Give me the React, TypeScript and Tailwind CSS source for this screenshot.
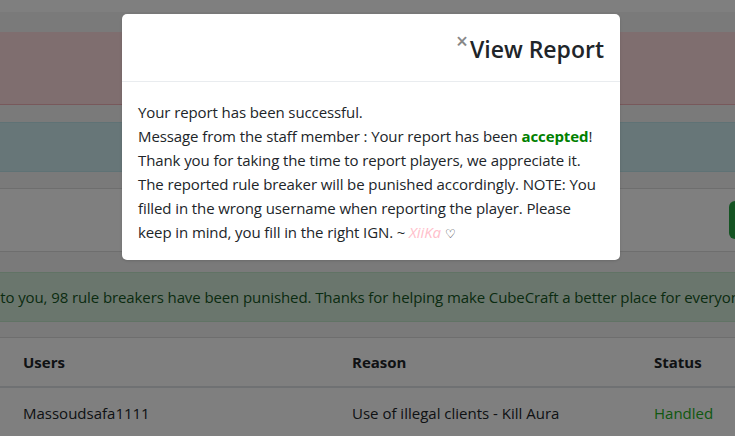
export default function App() {
  return (
    <div
      className="relative h-[436px] w-[735px] overflow-hidden bg-white text-[#212529]"
      style={{ fontFamily: '"Open Sans", "Noto Sans", sans-serif' }}
    >
      {/* page behind the modal */}
      <div className="h-[12px] bg-white" />
      <div className="h-[20px] bg-[#f4f4f4]" />
      <div className="h-[73px] border-b border-[#f1b0b7] bg-[#fedcdf]" />
      <div className="h-[17px] bg-[#f4f4f4]" />
      <div className="h-[50px] border-y border-[#bee5eb] bg-[#cfecf0]" />
      <div className="h-[16px] bg-[#f4f4f4]" />
      <div className="flex h-[64px] items-center justify-end border-y border-[#dcdcdc] bg-white">
        <div className="-mr-[20px] h-[38px] w-[26px] rounded-md bg-[#28a745]" />
      </div>
      <div className="h-[20px] bg-[#f4f4f4]" />
      <div className="flex h-[50px] items-center overflow-hidden whitespace-nowrap border-y border-[#c3e6cb] bg-[#d4edda] text-[15px] tracking-[-0.1px] text-[#155724]">
        <span className="-ml-[53px]">
          Thanks to you, 98 rule breakers have been punished. Thanks for helping make CubeCraft a better place for everyone!
        </span>
      </div>
      <div className="h-[15px] bg-[#f4f4f4]" />
      <div className="border-t border-[#dcdcdc] bg-white text-[15px]">
        <div className="grid h-[50px] grid-cols-[329px_302px_1fr] items-center border-b-2 border-[#dee2e6] pl-[23px] font-bold">
          <span>Users</span>
          <span>Reason</span>
          <span>Status</span>
        </div>
        <div className="grid h-[50px] grid-cols-[329px_302px_1fr] items-center pl-[23px]">
          <span>Massoudsafa1111</span>
          <span>Use of illegal clients - Kill Aura</span>
          <span className="text-[#22b022]">Handled</span>
        </div>
      </div>

      {/* backdrop */}
      <div className="absolute inset-0 bg-black/50" />

      {/* modal */}
      <div className="absolute left-[122px] top-[14px] w-[498px] rounded-[5px] bg-white shadow-sm">
        <div className="flex h-[68px] items-center justify-end border-b border-[#e9ecef] pr-[16px]">
          <span className="-mt-[12px] mr-[2px] text-[21px] font-semibold leading-none text-[#888]">×</span>
          <h2 className="mt-[3px] text-[23px] font-semibold leading-none text-[#212529]">View Report</h2>
        </div>
        <div className="px-[16px] pb-[14px] pt-[18px] text-[15px] leading-[24px] tracking-[-0.1px] text-[#212529]">
          Your report has been successful.
          <br />
          Message from the staff member : Your report has been{" "}
          <b className="font-bold text-[#008000]">accepted</b>!
          <br />
          Thank you for taking the time to report players, we appreciate it. The reported rule breaker will be
          punished accordingly. NOTE: You filled in the wrong username when reporting the player. Please keep in
          mind, you fill in the right IGN. ~ <i className="text-[#ffc0cb]">XiiKa</i>{" "}
          <span className="text-[12px]">♡</span>
        </div>
      </div>
    </div>
  );
}
